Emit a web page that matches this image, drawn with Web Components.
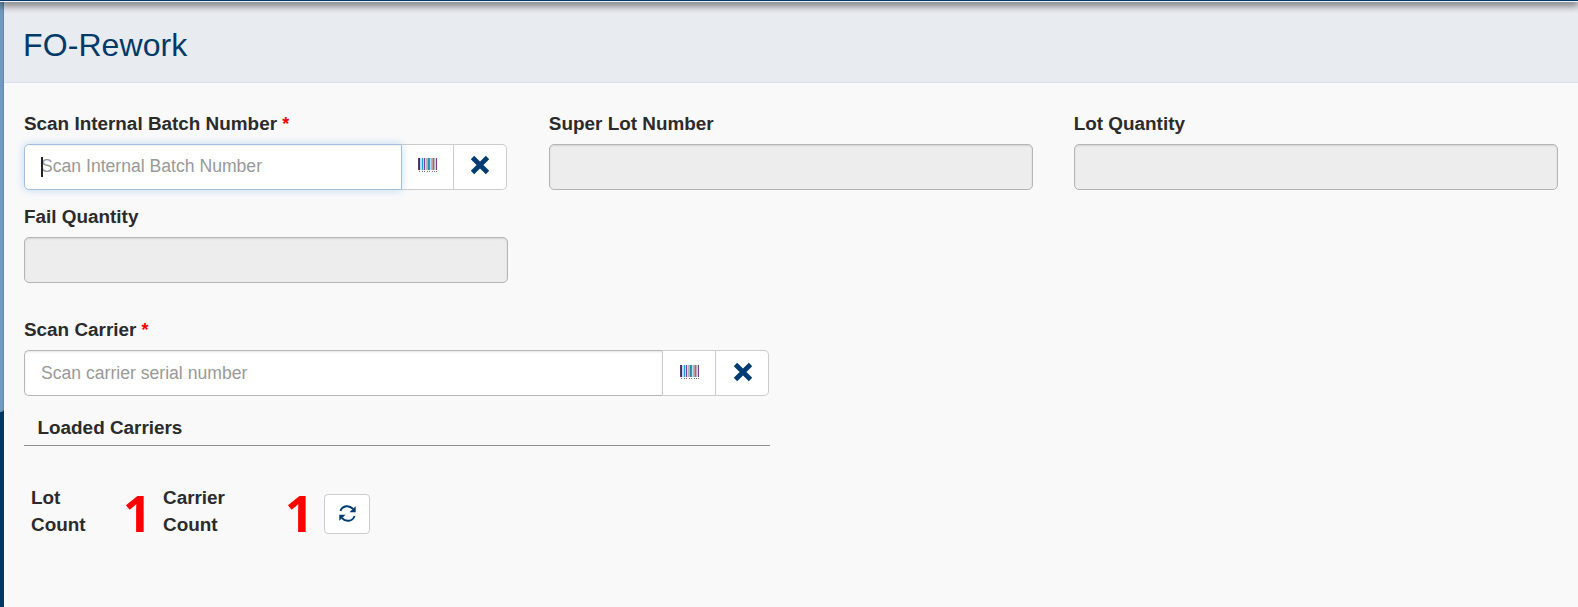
<!DOCTYPE html>
<html lang="en">
<head>
<meta charset="utf-8">
<title>FO-Rework</title>
<style>
html,body{margin:0;height:100%;overflow:hidden;background:#f9f9f9}
body{font-family:"Liberation Sans",Arial,sans-serif;color:#2b2b2b}
</style>
</head>
<body>
<rework-app>
  <page-title slot="title">FO-Rework</page-title>
  <form-field label="Scan Internal Batch Number" required><scan-input focused placeholder="Scan Internal Batch Number"></scan-input></form-field>
  <form-field label="Super Lot Number"><read-only></read-only></form-field>
  <form-field label="Lot Quantity"><read-only></read-only></form-field>
  <form-field label="Fail Quantity"><read-only></read-only></form-field>
  <carrier-panel slot="carriers">
    <form-field label="Scan Carrier" required><scan-input placeholder="Scan carrier serial number"></scan-input></form-field>
    <span slot="heading">Loaded Carriers</span>
  </carrier-panel>
  <count-bar slot="counts"></count-bar>
</rework-app>
<script>
const define = (name, html) => customElements.define(name, class extends HTMLElement {
  constructor() {
    super();
    const t = document.createElement('template');
    t.innerHTML = html;
    this.attachShadow({mode: 'open'}).append(t.content.cloneNode(true));
  }
  connectedCallback() {
    this.shadowRoot.querySelectorAll('[data-attr]').forEach(n => {
      n.textContent = this.getAttribute(n.dataset.attr) || '';
    });
  }
});

define('rework-app', `<style>
:host{display:grid;grid-template:2px 1fr / 4px 1fr;height:100vh;position:relative}
.top{grid-column:1/3;background:linear-gradient(#003a69 0 1px,#eef2f7 1px);position:relative;box-shadow:0 1px 8px 1px #000;z-index:2}
.side{background:#003863}
.thumb{height:410px;background:#7199bf;border-radius:0 0 4px 0;box-shadow:inset -1px 0 #6489ad}
main{background:#f9f9f9;min-width:0}
.fields{display:grid;grid-template-columns:repeat(3,1fr);column-gap:40.6px;row-gap:13px;padding:27px 20px 0}
</style>
<div class="top"></div><div class="side"><div class="thumb"></div></div>
<main><slot name="title"></slot><div class="fields"><slot></slot></div><slot name="carriers"></slot><slot name="counts"></slot></main>`);

define('page-title', `<style>
:host{display:flex;align-items:center;box-sizing:border-box;height:81px;padding:7px 19px 0;background:#e8ebf0;border-bottom:1px solid #dadeea;color:#003a69;font-size:32px;letter-spacing:.1px}
</style><slot></slot>`);

define('form-field', `<style>
:host{display:block;min-width:0}
.label{font-size:18.9px;line-height:27px;font-weight:700;margin-bottom:7px;height:27px;white-space:nowrap}
.star{display:none;color:#f00;font-size:18px}
:host([required]) .star{display:inline}
</style><div class="label"><span data-attr="label"></span> <span class="star">*</span></div><slot></slot>`);

define('read-only', `<style>
:host{display:block;box-sizing:border-box;height:46px;border:1px solid #b3b5b7;border-radius:5px;background:#ededed;box-shadow:inset 0 1px 2px #0000001c}
</style>`);

define('barcode-icon', `<style>:host{display:block;height:15px}svg{display:block}</style>
<svg width="20" height="15" shape-rendering="crispEdges"><g transform="translate(.5 0)" stroke-width="1">
<path stroke="#563a68" d="M0 0v12"/><path stroke="#173c83" d="M1 0v12"/><path stroke="#b5dff2" d="M2 0v12M5 0v12M12 0v12"/><path stroke="#d9d5dc" d="M3 0v12M7 0v12M17 0v12"/><path stroke="#249bd8" d="M4 0v12M11 0v12"/><path stroke="#783f91" d="M6 0v12M18 0v12"/><path stroke="#b6b6b6" d="M8 0v12M9 0v12M13 0v12M16 0v12"/><path stroke="#2e88a3" d="M10 0v12"/><path stroke="#c19aa0" d="M14 0v12"/><path stroke="#4b89bd" d="M15 0v12"/>
<path stroke="#776f8a" d="M1 13v1M4 13v1M6 13v1M9 13v1M11 13v1M14 13v1M16 13v1M18 13v1"/></g></svg>`);

define('scan-input', `<style>
:host{display:flex;height:46px}
:host([focused]){margin-right:1px}
.box{flex:1;box-sizing:border-box;position:relative;border:1px solid #b7b7b7;border-right-color:#ccc;border-radius:5px 0 0 5px;background:#fff;padding-left:16px;font-size:17.6px;line-height:44px;color:#999;box-shadow:inset 0 1px 2px #0000001c;white-space:nowrap}
.caret{display:none;position:absolute;left:16px;top:12px;width:2px;height:20px;background:#222}
:host([focused]) .box{line-height:43px;border-color:#a3c0da;box-shadow:0 0 8px #66a9e966,inset 0 1px 1px #0000000a;z-index:1}
:host([focused]) .caret{display:block}
.btn{box-sizing:border-box;width:53px;border:1px solid #ccc;border-left:0;background:#fff;display:flex;align-items:center;justify-content:center;padding-bottom:4px}
:host(:not([focused])) .btn{padding-bottom:2px}
:host(:not([focused])) .clear{padding-left:1px}
:host(:not([focused])) .scan{padding-left:2px}
.clear{border-radius:0 5px 5px 0}
:host([focused]) .scan{width:52px}
svg{display:block}
</style><div class="box"><span data-attr="placeholder"></span><i class="caret"></i></div>
<div class="btn scan"><barcode-icon></barcode-icon></div>
<div class="btn clear"><svg width="20" height="20" viewBox="0 0 20 20"><path stroke="#003c71" stroke-width="4.800" d="M2.500 2.500 17.500 17.500M17.500 2.500 2.500 17.500"/></svg></div>`);

define('carrier-panel', `<style>
:host{display:block;margin:33px 20px 0;width:746px}
.head{font-weight:700;font-size:18.9px;line-height:27px;padding:18px 13.500px 4px;border-bottom:1px solid #8e8e8e}
.scan{padding-right:1px}
</style><div class="scan"><slot></slot></div><div class="head"><slot name="heading"></slot></div>`);

define('count-bar', `<style>
:host{display:grid;grid-template-columns:92px 40px 122px 39px 46px;align-items:center;margin:41px 0 0 27px;height:54px}
.name{font-weight:700;font-size:18.9px;line-height:27px;margin-top:-6px}
.num{font:700 50px/54px "Open Sans","Liberation Sans",sans-serif;color:#f00;margin-top:-3px}
.refresh{box-sizing:border-box;height:40px;border:1px solid #ccc;border-radius:4px;background:#fff;display:flex;align-items:center;justify-content:center;padding-bottom:2px}
</style><div class="name">Lot<br>Count</div><div class="num">1</div><div class="name">Carrier<br>Count</div><div class="num">1</div>
<div class="refresh"><svg width="17" height="17" viewBox="0 0 17 17"><path fill="none" stroke="#003c71" stroke-width="1.9" d="M1.400 6C3.600.300 10-.300 14.200 4M15.600 11C13.400 16.700 7 17.300 2.800 13"/><path fill="#003c71" d="M16.700 1.200v6h-6.300zM.3 15.800v-6h6.300z"/></svg></div>`);
</script>
</body>
</html>
